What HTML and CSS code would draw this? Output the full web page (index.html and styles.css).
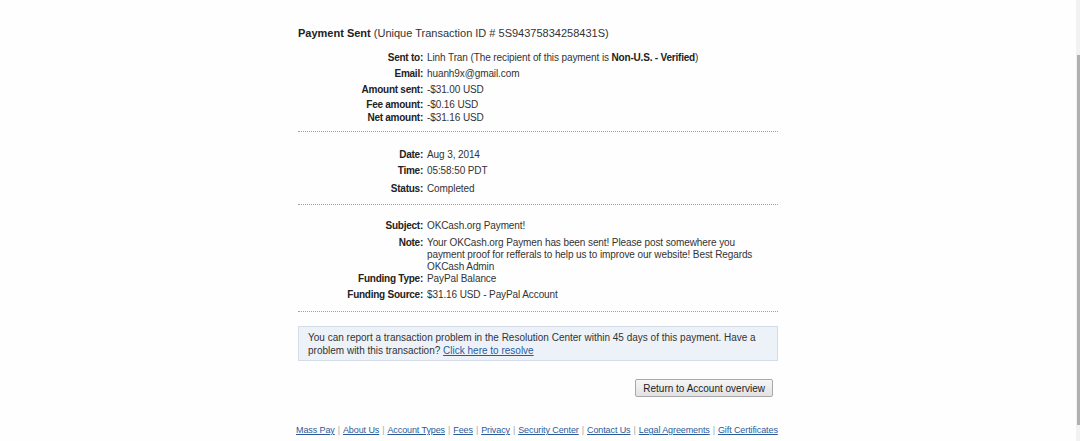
FILE: index.html
```html
<!DOCTYPE html>
<html>
<head>
<meta charset="utf-8">
<link rel="stylesheet" href="styles.css">
</head>
<body>
<div class="page">
  <div class="title"><b>Payment Sent</b> (Unique Transaction ID # 5S94375834258431S)</div>

  <div class="section s1">
    <div class="row"><span class="lbl">Sent to:</span><span class="val">Linh Tran (The recipient of this payment is <b>Non-U.S. - Verified</b>)</span></div>
    <div class="row"><span class="lbl">Email:</span><span class="val">huanh9x@gmail.com</span></div>
    <div class="row"><span class="lbl">Amount sent:</span><span class="val">-$31.00 USD</span></div>
    <div class="row"><span class="lbl">Fee amount:</span><span class="val">-$0.16 USD</span></div>
    <div class="row"><span class="lbl">Net amount:</span><span class="val">-$31.16 USD</span></div>
  </div>
  <div class="dots d1"></div>

  <div class="section s2">
    <div class="row"><span class="lbl">Date:</span><span class="val">Aug 3, 2014</span></div>
    <div class="row"><span class="lbl">Time:</span><span class="val">05:58:50 PDT</span></div>
    <div class="row"><span class="lbl">Status:</span><span class="val">Completed</span></div>
  </div>
  <div class="dots d2"></div>

  <div class="section s3">
    <div class="row"><span class="lbl">Subject:</span><span class="val">OKCash.org Payment!</span></div>
    <div class="row"><span class="lbl">Note:</span><span class="val">Your OKCash.org Paymen has been sent! Please post somewhere you payment proof for refferals to help us to improve our website! Best Regards OKCash Admin</span></div>
    <div class="row"><span class="lbl">Funding Type:</span><span class="val">PayPal Balance</span></div>
    <div class="row"><span class="lbl">Funding Source:</span><span class="val">$31.16 USD - PayPal Account</span></div>
  </div>
  <div class="dots d3"></div>

  <div class="notice">You can report a transaction problem in the Resolution Center within 45 days of this payment. Have a problem with this transaction? <a href="#">Click here to resolve</a></div>

  <div class="actions"><button class="btn">Return to Account overview</button></div>

  <div class="footer">
    <a href="#">Mass Pay</a><span class="sep">|</span><a href="#">About Us</a><span class="sep">|</span><a href="#">Account Types</a><span class="sep">|</span><a href="#">Fees</a><span class="sep">|</span><a href="#">Privacy</a><span class="sep">|</span><a href="#">Security Center</a><span class="sep">|</span><a href="#">Contact Us</a><span class="sep">|</span><a href="#">Legal Agreements</a><span class="sep">|</span><a href="#">Gift Certificates</a>
  </div>
</div>
<div class="scroll"><div class="thumb"></div></div>
</body>
</html>
```

FILE: styles.css
```css
html, body {
  margin: 0;
  padding: 0;
  background: #fefefe;
}
body {
  font-family: "Liberation Sans", Arial, sans-serif;
  font-size: 11px;
  color: #333;
  overflow: hidden;
}
.page {
  width: 480px;
  margin-left: 298px;
  padding-top: 26px;
}
.title {
  line-height: 14px;
  height: 14px;
}
.title b { color: #222; }
.section { display: flex; flex-direction: column; }
.row {
  display: grid;
  grid-template-columns: 125px 1fr;
  column-gap: 4px;
  font-size: 10px;
  line-height: 12px;
  padding-bottom: 3px;
}
.lbl {
  text-align: right;
  font-weight: bold;
  color: #222;
  white-space: nowrap;
  letter-spacing: -0.25px;
}
.val { letter-spacing: -0.1px; padding-right: 16px; }
.val b { color: #222; letter-spacing: -0.2px; }
.s1 { margin-top: 12px; }
.s1 .row:nth-child(1),
.s1 .row:nth-child(2) { padding-bottom: 4px; }
.s1 .row:nth-child(4) { padding-bottom: 1px; }
.s2 { margin-top: 17px; }
.s2 .row:nth-child(1) { padding-bottom: 4px; }
.s2 .row:nth-child(2) { padding-bottom: 6px; }
.s3 { margin-top: 15px; }
.s3 .row:nth-child(1) { padding-bottom: 5px; }
.s3 .row:nth-child(2) { padding-bottom: 0; }
.s3 .row:nth-child(3) { padding-bottom: 4px; }
.dots {
  border-top: 1px dotted #a0a0a0;
}
.d1 { margin-top: 4px; }
.d2 { margin-top: 6px; }
.d3 { margin-top: 7px; }
.notice {
  margin-top: 14px;
  background: #edf2f9;
  border: 1px solid #d3dce8;
  padding: 4px 8px 3px 9px;
  font-size: 10px;
  line-height: 13px;
  color: #333;
}
.notice a { color: #2a5aa0; text-decoration: underline; }
.actions {
  display: flex;
  justify-content: flex-end;
  padding-right: 5px;
  margin-top: 18px;
}
.btn {
  font-family: "Liberation Sans", Arial, sans-serif;
  font-size: 10px;
  color: #222;
  height: 18px;
  padding: 0 7px;
  border: 1px solid #a8a8a8;
  border-radius: 2px;
  background: linear-gradient(#f6f6f6, #e2e2e2);
}
.footer {
  margin-top: 28px;
  margin-left: -2px;
  font-size: 9px;
  line-height: 11px;
  letter-spacing: -0.1px;
  white-space: nowrap;
  color: #999;
}
.footer a { color: #2a5a9a; text-decoration: underline; }
.sep { margin: 0 3px; color: #aaa; }
.scroll {
  position: fixed;
  top: 0;
  right: 0;
  width: 4px;
  height: 441px;
  background: #f2f2f2;
}
.thumb {
  margin-top: 55px;
  height: 370px;
  margin-left: 1px;
  background: #b0b0b0;
}
```
